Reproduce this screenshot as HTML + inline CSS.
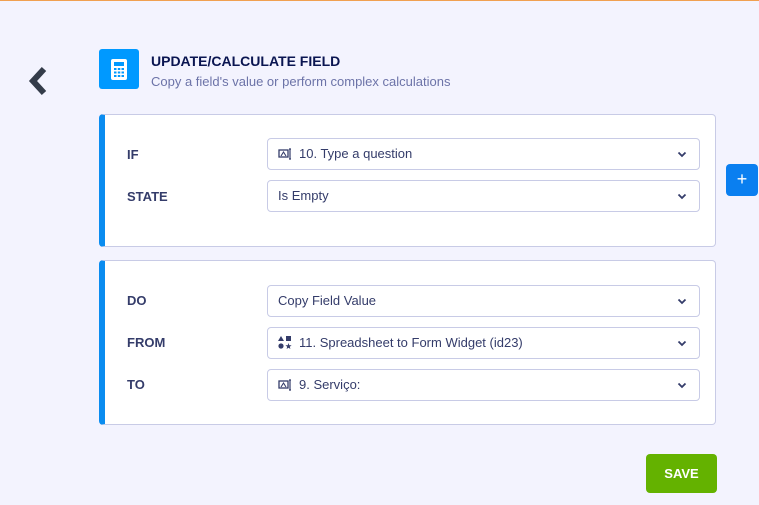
<!DOCTYPE html>
<html><head><style>
body{margin:0;width:759px;height:505px;background:#f3f3fe;font-family:"Liberation Sans",sans-serif;position:relative;overflow:hidden}
.a{position:absolute}
.card{position:absolute;left:99px;width:617px;background:#fff;border:1px solid #c8cbe6;border-left:6px solid #0a8cf0;border-radius:4px;box-sizing:border-box}
.lab{position:absolute;left:127px;font-size:13px;font-weight:bold;color:#343c6a}
.sel{position:absolute;left:267px;width:433px;height:32px;background:#fff;border:1px solid #c8cbe6;border-radius:4px;box-sizing:border-box;font-size:13px;color:#343c6a;line-height:30px;padding-left:10px}
.sel svg.c{position:absolute;right:12px;top:12px}
.ic{display:inline-block;vertical-align:middle;margin-right:7px;margin-top:-2px}
</style></head><body>
<div class="a" style="left:0;top:0;width:759px;height:1px;background:#f0a050"></div>
<svg class="a" style="left:26px;top:65px" width="24" height="32" viewBox="0 0 24 32"><path d="M18 4 L7 16 L18 28" stroke="#343c4a" stroke-width="6" fill="none"/></svg>
<div class="a" style="left:99px;top:49px;width:40px;height:40px;background:#0099ff;border-radius:3px"></div>
<svg class="a" style="left:111px;top:59px" width="16" height="21" viewBox="0 0 16 21"><rect x="0" y="0" width="16" height="21" rx="2" fill="#fff"/><rect x="3" y="3" width="10" height="4" fill="#0099ff"/><g fill="#0099ff"><rect x="3" y="9" width="2.5" height="2"/><rect x="6.8" y="9" width="2.5" height="2"/><rect x="10.5" y="9" width="2.5" height="2"/><rect x="3" y="12.5" width="2.5" height="2"/><rect x="6.8" y="12.5" width="2.5" height="2"/><rect x="10.5" y="12.5" width="2.5" height="2"/><rect x="3" y="16" width="2.5" height="2"/><rect x="6.8" y="16" width="2.5" height="2"/><rect x="10.5" y="16" width="2.5" height="2"/></g></svg>
<div class="a" style="left:151px;top:53px;font-size:14px;font-weight:bold;color:#0a1551">UPDATE/CALCULATE FIELD</div>
<div class="a" style="left:151px;top:74px;font-size:13px;color:#6c73a8">Copy a field's value or perform complex calculations</div>
<div class="card" style="top:114px;height:133px"></div>
<div class="card" style="top:260px;height:165px"></div>
<div class="lab" style="top:147px">IF</div>
<div class="lab" style="top:189px">STATE</div>
<div class="lab" style="top:293px">DO</div>
<div class="lab" style="top:335px">FROM</div>
<div class="lab" style="top:377px">TO</div>
<div class="sel" style="top:138px"><svg class="ic" width="14" height="12" viewBox="0 0 14 12"><rect x="1" y="2" width="9" height="7" fill="none" stroke="#343c6a" stroke-width="1.3"/><path d="M3 8 L5.5 4 L8 8" fill="none" stroke="#343c6a" stroke-width="1.1"/><path d="M11 1 h2 M12 1 v10 M11 11 h2" stroke="#343c6a" stroke-width="1.2"/></svg>10. Type a question<svg class="c" width="10" height="7" viewBox="0 0 10 7"><path d="M1.5 1.5 L5 5 L8.5 1.5" stroke="#343c6a" stroke-width="1.8" fill="none"/></svg></div>
<div class="sel" style="top:180px">Is Empty<svg class="c" width="10" height="7" viewBox="0 0 10 7"><path d="M1.5 1.5 L5 5 L8.5 1.5" stroke="#343c6a" stroke-width="1.8" fill="none"/></svg></div>
<div class="sel" style="top:285px">Copy Field Value<svg class="c" width="10" height="7" viewBox="0 0 10 7"><path d="M1.5 1.5 L5 5 L8.5 1.5" stroke="#343c6a" stroke-width="1.8" fill="none"/></svg></div>
<div class="sel" style="top:327px"><svg class="ic" width="14" height="13" viewBox="0 0 14 13"><path d="M3 0 L6 5 L0 5Z" fill="#343c6a"/><rect x="8" y="0" width="5" height="5" fill="#343c6a"/><circle cx="3" cy="10" r="2.6" fill="#343c6a"/><path d="M10.5 7 L11.3 9.2 L13.6 9.3 L11.8 10.7 L12.4 13 L10.5 11.7 L8.6 13 L9.2 10.7 L7.4 9.3 L9.7 9.2Z" fill="#343c6a"/></svg>11. Spreadsheet to Form Widget (id23)<svg class="c" width="10" height="7" viewBox="0 0 10 7"><path d="M1.5 1.5 L5 5 L8.5 1.5" stroke="#343c6a" stroke-width="1.8" fill="none"/></svg></div>
<div class="sel" style="top:369px"><svg class="ic" width="14" height="12" viewBox="0 0 14 12"><rect x="1" y="2" width="9" height="7" fill="none" stroke="#343c6a" stroke-width="1.3"/><path d="M3 8 L5.5 4 L8 8" fill="none" stroke="#343c6a" stroke-width="1.1"/><path d="M11 1 h2 M12 1 v10 M11 11 h2" stroke="#343c6a" stroke-width="1.2"/></svg>9. Serviço:<svg class="c" width="10" height="7" viewBox="0 0 10 7"><path d="M1.5 1.5 L5 5 L8.5 1.5" stroke="#343c6a" stroke-width="1.8" fill="none"/></svg></div>
<div class="a" style="left:726px;top:164px;width:32px;height:32px;background:#0a7ff0;border-radius:4px;color:#fff;font-size:18px;text-align:center;line-height:31px">+</div>
<div class="a" style="left:646px;top:454px;width:71px;height:39px;background:#64b200;border-radius:4px;color:#fff;font-size:13px;font-weight:bold;text-align:center;line-height:39px">SAVE</div>
</body></html>
